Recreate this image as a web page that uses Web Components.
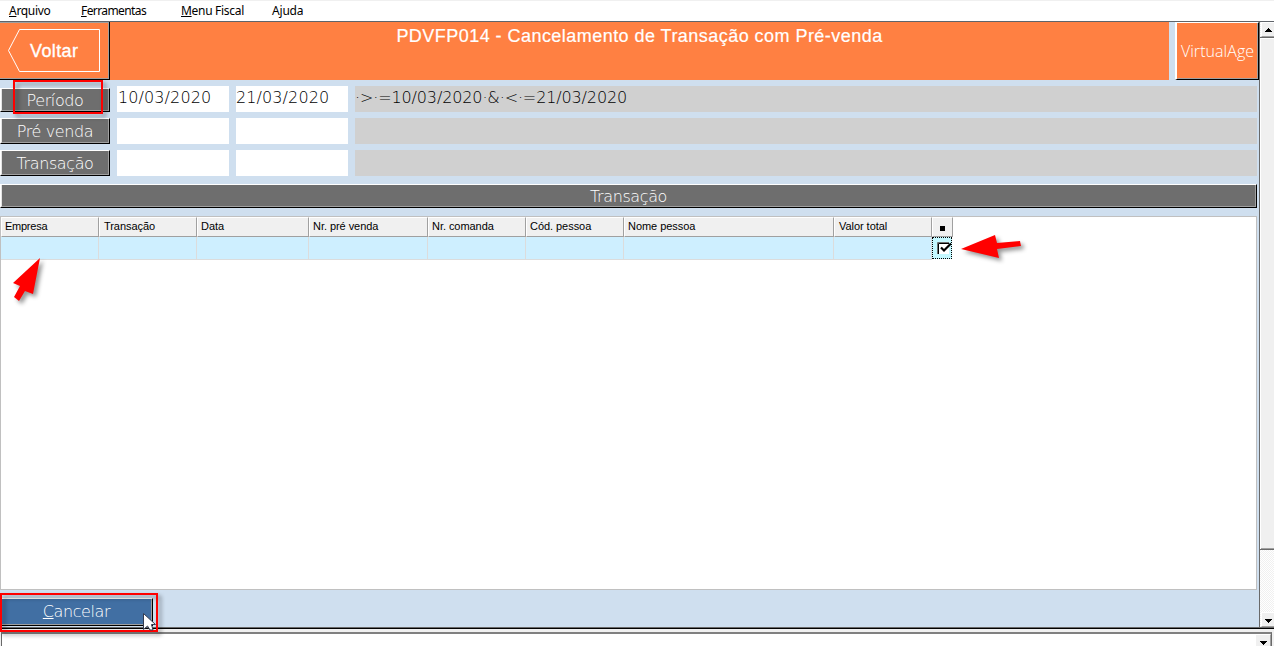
<!DOCTYPE html>
<html lang="pt-BR">
<head>
<meta charset="utf-8">
<title>PDVFP014</title>
<style>
    body {
        margin: 0;
        width: 1274px;
        height: 646px;
        overflow: hidden;
        background: #cfdfef;
        font-family: "DejaVu Sans", sans-serif;
    }
</style>
</head>
<body>
<pdv-app></pdv-app>

<script>
function define(name, html, setup) {
    const template = document.createElement("template");
    template.innerHTML = "<style>*{box-sizing:border-box}:host{box-sizing:border-box}</style>" + html;
    class El extends HTMLElement {
        constructor() {
            super();
            this.attachShadow({mode: "open"});
            this.shadowRoot.appendChild(template.content.cloneNode(true));
        }
        connectedCallback() {
            if (setup) setup(this, this.shadowRoot);
        }
    }
    window.customElements.define(name, El);
}

define("menu-bar", `
    <style>
    :host {
        display: flex;
        height: 22px;
        flex: none;
        padding-left: 9px;
        background: #fff;
        border-top: 1px solid #f0f0f0;
        border-bottom: 1px solid #60646a;
        font: 12px/20px "Noto Sans", sans-serif;
        color: #000;
    }
    </style>
    <slot></slot>
`);

define("menu-item", `
    <style>
    :host { display: block; white-space: nowrap; width: var(--w); letter-spacing: var(--ls, -0.3px); }
    </style>
    <slot></slot>
`);

// classic raised button, face colour comes from --face
define("bevel-button", `
    <style>
    :host {
        display: block;
        position: relative;
        background: var(--face, #6e6e6e);
        color: #fff;
        border: solid;
        border-width: 1px;
        border-color: #fff #000 #000 #fff;
        font: 16px "DejaVu Sans", sans-serif;
        font-weight: 200;
        letter-spacing: -0.4px;
    }
    .face {
        height: 100%;
        display: flex;
        align-items: center;
        justify-content: center;
        white-space: pre;
        border: solid #a0a0a0;
        border-width: 0 1px 1px 0;
        border-left: 1px solid var(--edge, #e3e3e3);
        padding-top: var(--drop, 1px);
    }
    </style>
    <div class="face"><slot></slot></div>
`);

define("back-button", `
    <style>
    :host {
        display: block;
        width: 110px;
        height: 58px;
        background: #ff8042;
        border: solid #000;
        border-width: 0 1px 1px 0;
    }
    div {
        height: 100%;
        border: solid #a0a0a0;
        border-width: 1px 1px 1px 0;
    }
    svg { display: block; }
    text { font: 18px "Liberation Sans", sans-serif; fill: #fff; stroke: #fff; stroke-width: .35px; }
    </style>
    <div>
        <svg width="108" height="55" viewBox="0 23 108 55">
            <path d="M19.5 29.5H99.5V71.5H19.5L8.5 50.5Z" fill="none" stroke="#fff"/>
            <text x="30" y="57" textLength="48">Voltar</text>
        </svg>
    </div>
`);

define("form-header", `
    <style>
    :host { display: flex; height: 58px; flex: none; }
    .title {
        width: 1059px;
        margin-right: 6px;
        background: #ff8042;
        color: #fff;
        text-align: center;
        font: 18px/28px "Liberation Sans", sans-serif;
        letter-spacing: 0.46px;
        -webkit-text-stroke: .2px #fff;
    }
    bevel-button {
        --face: #ff8042;
        --edge: #ff8042;
        --drop: 0;
        width: 84px;
        font: 16px "Open Sans", sans-serif;
        font-weight: 300;
        letter-spacing: 0.05px;
        border-left-width: 2px;
    }
    </style>
    <back-button></back-button>
    <div class="title"><slot></slot></div>
    <bevel-button>VirtualAge</bevel-button>
`);

define("filter-row", `
    <style>
    :host { display: flex; height: 26px; align-items: flex-end; }
    bevel-button { width: 110px; height: var(--bh, 26px); margin-right: 7px; }
    .in, .expr {
        height: 26px;
        width: 112px;
        margin-right: 7px;
        background: #fff;
        font: 16px/23px "DejaVu Sans", sans-serif;
        font-weight: 200;
        letter-spacing: 0.1px;
        padding-left: 1px;
        color: #000;
        white-space: pre;
    }
    .to { padding-left: 0; }
    .expr { width: 902px; margin: 0; background: #d0d0d0; letter-spacing: -0.13px; padding-left: 0; }
    </style>
    <bevel-button></bevel-button>
    <div class="in from"></div>
    <div class="in to"></div>
    <div class="expr"></div>
`, (el, root) => {
    root.querySelector("bevel-button").textContent = el.getAttribute("label");
    root.querySelector(".from").textContent = el.getAttribute("from");
    root.querySelector(".to").textContent = el.getAttribute("to");
    root.querySelector(".expr").textContent = el.getAttribute("expr");
});

define("data-grid", `
    <style>
    :host {
        display: block;
        width: 1257px;
        height: 374px;
        background: #fff;
        border: 1px solid #c0c0c0;
    }
    .row { display: grid; width: 952px; }
    .head div {
        height: 20px;
        padding-left: 3px;
        background: #f0f0f0;
        border: solid #fff;
        border-width: 1px;
        border-right-color: #a0a0a0;
        border-bottom-color: #a0a0a0;
        font: 11px/17px "Liberation Sans", sans-serif;
        letter-spacing: -0.05px;
        color: #000;
        white-space: nowrap;
    }
    .head div:first-child { letter-spacing: -0.25px; }
    .head div:nth-child(2), .head div:nth-child(8) { padding-left: 4px; }
    .body div {
        height: 23px;
        background: #ceefff;
        border: solid #dcdcdc;
        border-width: 0 1px 1px 0;
    }
    .head .mark { padding: 8px 0 0 7px; }
    .mark i { display: block; width: 5px; height: 5px; background: #000; }
    .body .check {
        border: 1px dotted #000;
        background: #c4f8ff;
        width: 20px;
        height: 22px;
        padding: 4px 0 0 4px;
    }
    svg { display: block; }
    </style>
    <div class="row head"></div>
    <div class="row body"></div>
`, (el, root) => {
    const cols = [["Empresa", 98], ["Transação", 98], ["Data", 112], ["Nr. pré venda", 119],
        ["Nr. comanda", 98], ["Cód. pessoa", 98], ["Nome pessoa", 210], ["Valor total", 98]];
    const tracks = cols.map(c => c[1] + "px").join(" ") + " 21px";
    const head = root.querySelector(".head");
    const body = root.querySelector(".body");
    head.style.gridTemplateColumns = tracks;
    body.style.gridTemplateColumns = tracks;
    head.innerHTML = cols.map(c => `<div>${c[0]}</div>`).join("") + `<div class="mark"><i></i></div>`;
    body.innerHTML = cols.map(() => "<div></div>").join("") + `
        <div class="check"><svg width="14" height="13">
            <path d="M.5 12V.5H12" fill="none" stroke="#707070"/>
            <path d="M1 1h11v11H1z" fill="#fff"/>
            <path d="M1.5 12V1.5H12" fill="none" stroke="#000"/>
            <path d="M4 5.5L7 8.5L14 1.5" fill="none" stroke="#000" stroke-width="2.2"/>
        </svg></div>`;
});

define("arrow-box", `
    <style>
    :host {
        display: flex;
        align-items: center;
        justify-content: center;
        background: #f0f0f0;
        border: solid #a0a0a0;
        border-width: 1px;
        border-top-color: #fff;
        border-left-color: #fff;
    }
    :host([up]) svg { transform: rotate(180deg); }
    </style>
    <svg width="7" height="4" shape-rendering="crispEdges"><path d="M0 0h7v1H0zM1 1h5v1H1zM2 2h3v1H2zM3 3h1v1H3z"/></svg>
`);

define("scroll-bar", `
    <style>
    :host {
        display: flex;
        flex-direction: column;
        width: 15px;
        border-left: 1px solid #696969;
        background: repeating-conic-gradient(#fff 0 25%, #f0f0f0 0 50%) 0 0 / 2px 2px;
    }
    arrow-box { height: 15px; margin-left: 1px; border-right: 0; }
    .thumb {
        height: 513px;
        margin-bottom: auto;
        background: #f0f0f0;
        border: solid #696969;
        border-width: 1px 0;
        box-shadow: inset 1px 1px #fff, inset 0 -1px #a0a0a0;
    }
    arrow-box:last-child { padding-top: 2px; }
    </style>
    <arrow-box up></arrow-box>
    <div class="thumb"></div>
    <arrow-box></arrow-box>
`);

define("combo-line", `
    <style>
    :host {
        display: flex;
        justify-content: flex-end;
        height: 18px;
        background: #f0f0f0;
        padding: 3px 2px 0 1px;
        border-top: 1px solid #000;
    }
    div {
        flex: 1;
        display: flex;
        justify-content: flex-end;
        background: #fff;
        border: solid #696969;
        border-width: 2px 1px 0 1px;
        border-top-color: #808080;
    }
    arrow-box { width: 16px; height: 18px; }
    </style>
    <div><arrow-box></arrow-box></div>
`);

// red annotations and the mouse pointer lying over the form
define("mark-layer", `
    <style>
    :host { position: absolute; left: 0; top: 0; pointer-events: none; }
    svg { display: block; }
    .red { filter: drop-shadow(3px 3px 2px rgba(0,0,0,.42)); }
    </style>
    <svg width="1274" height="646">
        <g class="red">
            <rect x="14" y="81" width="88" height="32" fill="none" stroke="#f00" stroke-width="2"/>
            <rect x="1" y="594" width="156" height="37" fill="none" stroke="#f00" stroke-width="2"/>
            <path fill="#f00" d="M40 258L13 283L20 286L14 297L19 301L25 291L33 294Z"/>
            <path fill="#f00" d="M961 249L995 235L997 243L1020 241L1021 246L997 249L999 258Z"/>
        </g>
        <path d="M143.5 613.5V629.5L147.5 626L150 630H153L151.5 624.5H155.5Z" fill="#fff" stroke="#333c50"/>
    </svg>
`);

define("pdv-app", `
    <style>
    :host { display: flex; flex-direction: column; height: 646px; position: relative; }
    .work { display: flex; height: 606px; }
    .pane { width: 1259px; display: flex; flex-direction: column; background: #cfdfef; }
    .filters { display: grid; gap: 6px; padding: 6px 0 8px; }
    .section { width: 1257px; height: 24px; margin-bottom: 8px; flex: none; }
    .cancel { --face: #416fa3; --drop: 0; width: 153px; height: 28px; margin-top: 8px; }
    .line { height: 1px; background: #696969; }
    </style>
    <menu-bar>
        <menu-item style="--w:72px"><u>A</u>rquivo</menu-item>
        <menu-item style="--w:100px;--ls:-0.6px"><u>F</u>erramentas</menu-item>
        <menu-item style="--w:91px"><u>M</u>enu Fiscal</menu-item>
        <menu-item style="--ls:-0.2px">A<u>j</u>uda</menu-item>
    </menu-bar>
    <div class="work">
        <div class="pane">
            <form-header>PDVFP014 - Cancelamento de Transação com Pré-venda</form-header>
            <div class="filters">
                <filter-row label="Período" from="10/03/2020" to="21/03/2020" expr="·&gt;·=10/03/2020·&amp;·&lt;·=21/03/2020" style="--bh:24px"></filter-row>
                <filter-row label="Pré venda" from="" to="" expr=""></filter-row>
                <filter-row label="Transação" from="" to="" expr=""></filter-row>
            </div>
            <bevel-button class="section">Transação</bevel-button>
            <data-grid></data-grid>
            <bevel-button class="cancel"><u>C</u>ancelar</bevel-button>
        </div>
        <scroll-bar></scroll-bar>
    </div>
    <div class="line"></div>
    <combo-line></combo-line>
    <mark-layer></mark-layer>
`);
</script>
</body>
</html>
